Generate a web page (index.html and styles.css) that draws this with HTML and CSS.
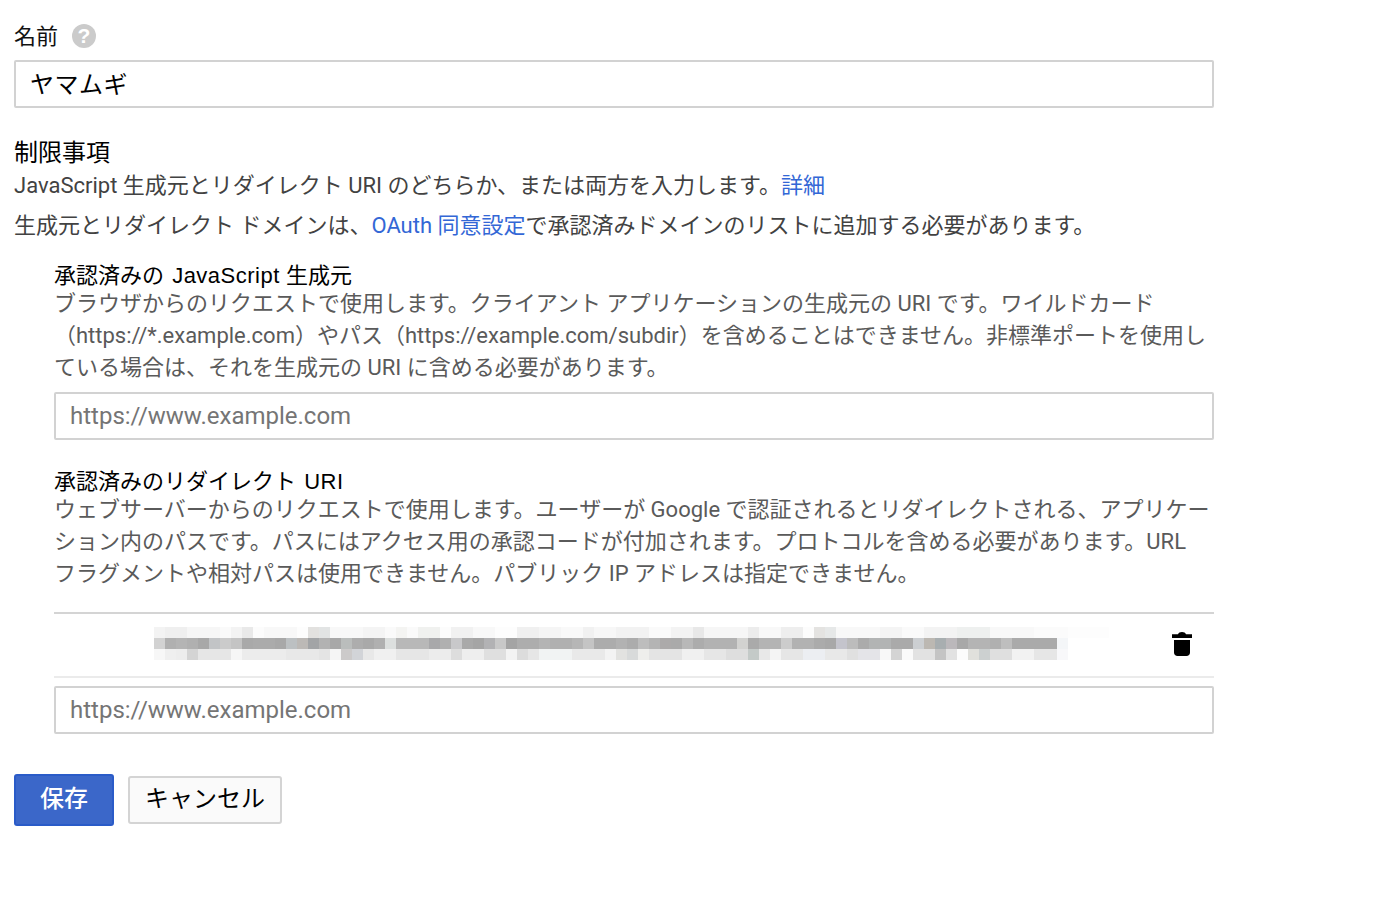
FILE: index.html
```html
<!DOCTYPE html>
<html lang="ja">
<head>
<meta charset="utf-8">
<title>名前</title>
<link rel="stylesheet" href="styles.css">
</head>
<body>
<form class="form">
  <div class="name-label">
    <span class="label">名前</span>
    <span class="help">?</span>
  </div>
  <div class="field value">ヤマムギ</div>

  <h2 class="section-title">制限事項</h2>
  <p class="intro first">JavaScript 生成元とリダイレクト URI のどちらか、または両方を入力します。<a href="#">詳細</a></p>
  <p class="intro second">生成元とリダイレクト ドメインは、<a href="#">OAuth 同意設定</a>で承認済みドメインのリストに追加する必要があります。</p>

  <section class="group origins">
    <h3 class="group-title">承認済みの <span class="latin">JavaScript</span> 生成元</h3>
    <p class="desc">ブラウザからのリクエストで使用します。クライアント アプリケーションの生成元の URI です。ワイルドカード<br>（https://*.example.com）やパス（https://example.com/subdir）を含めることはできません。非標準ポートを使用し<br>ている場合は、それを生成元の URI に含める必要があります。</p>
    <div class="field placeholder">https://www.example.com</div>
  </section>

  <section class="group redirects">
    <h3 class="group-title">承認済みのリダイレクト <span class="latin">URI</span></h3>
    <p class="desc">ウェブサーバーからのリクエストで使用します。ユーザーが Google で認証されるとリダイレクトされる、アプリケー<br>ション内のパスです。パスにはアクセス用の承認コードが付加されます。プロトコルを含める必要があります。URL<br>フラグメントや相対パスは使用できません。パブリック IP アドレスは指定できません。</p>
    <div class="uri-row">
      <div class="blurred"><i class="px top"></i><i class="px mid"></i><i class="px bot"></i></div>
      <svg class="trash" viewBox="0 0 20 24" width="20" height="24" aria-hidden="true"><path d="M6 2.2C6.6.8 8 0 10 0s3.4.8 4 2.200L20 2.200V6H0V2.200ZM2 8h16v12.500c0 2-1.500 3.500-3.500 3.500h-9C3.500 24 2 22.500 2 20.500Z"/></svg>
    </div>
    <div class="field placeholder">https://www.example.com</div>
  </section>

  <div class="actions">
    <button type="button" class="btn primary">保存</button>
    <button type="button" class="btn secondary">キャンセル</button>
  </div>
</form>
</body>
</html>
```
FILE: styles.css
```css
* { box-sizing: border-box; }
html, body { margin: 0; padding: 0; background: #fff; }
body {
  font-family: Roboto, "Noto Sans CJK JP", "Liberation Sans", sans-serif;
  font-size: 22px;
  color: #212121;
}
.form { width: 1214px; padding: 20px 0 0 14px; }
.name-label { display: flex; align-items: center; height: 32px; color: #111; }
.label { padding-bottom: 5px; }
.help {
  width: 24px; height: 24px; margin-left: 14px; border-radius: 50%;
  background: #cbcbcb; color: #fff; font: bold 21px/24px "Liberation Sans", sans-serif; text-align: center;
}
.field {
  height: 48px; border: 2px solid #d2d2d2; border-radius: 2px; padding: 0 14px;
  line-height: 44px; font-size: 24px; background: #fff;
}
.value { margin-top: 8px; color: #000; line-height: 46px; letter-spacing: .5px; }
.section-title { margin: 28px 0 0; font-size: 24px; font-weight: 400; line-height: 34px; color: #000; }
.intro { margin: 0; line-height: 32px; color: #424242; }
.first { margin-top: 0; }
.second { margin-top: 8px; }
a { color: #3367d6; text-decoration: none; }
.group { margin-left: 40px; }
.origins { margin-top: 18px; }
.redirects { margin-top: 26px; }
.group-title {
  margin: 0; font-family: "Liberation Sans", "Noto Sans CJK JP", sans-serif;
  font-size: 22px; font-weight: 400; line-height: 32px; color: #000; height: 28px;
}
.latin { margin-left: 2px; letter-spacing: .5px; }
.desc { margin: 0; line-height: 32px; color: #5a5a5a; white-space: nowrap; }
.placeholder { margin-top: 8px; color: #757575; }
.uri-row {
  display: flex; align-items: center; justify-content: space-between; height: 66px; margin-top: 22px;
  border-top: 2px solid #d4d4d4; border-bottom: 2px solid #ebebeb;
  padding: 0 22px 2px 100px;
}
.blurred { display: flex; flex-direction: column; width: 914px; height: 34px; }
.px { display: block; width: 100%; height: 11px; flex: none; }
.px.top {
  width: 955px;
  background: #fdfdfd linear-gradient(90deg,
    #f3f3f3 0 11px, #efefef 11px 33px, #f6f6f6 33px 66px, #fafafa 66px 77px, #f3f3f3 77px 88px, #e9e9e9 88px 99px,
    #fcfcfc 99px 110px, #f8f8f8 110px 143px, #fdfdfd 143px 154px, #e2e1df 154px 165px, #e2e4e4 165px 176px, #f8f8f8 176px 209px,
    #f4f4f4 209px 231px, #fafafa 231px 242px, #f4f4f2 242px 253px, #fafafa 253px 264px, #f0f1ef 264px 286px, #fcfcfc 286px 297px,
    #f1f1f1 297px 319px, #f8f8f8 319px 341px, #fdfdfd 341px 363px, #f0f0f0 363px 385px, #f5f5f5 385px 407px, #f9f9f9 407px 429px,
    #f1f1f1 429px 440px, #f7f7f7 440px 462px, #f2f2f2 462px 495px, #fafafa 495px 517px, #f3f3f3 517px 539px, #e8e8e8 539px 550px,
    #f6f6f6 550px 594px, #ececec 594px 605px, #f8f8f8 605px 627px, #eeeeee 627px 649px, #fcfcfc 649px 660px, #e4e3e1 660px 671px,
    #e6e8e8 671px 682px, #f8f8f8 682px 726px, #f4f4f4 726px 748px, #fafafa 748px 770px, #f3f3f3 770px 803px, #eef0ef 803px 836px,
    #f8f8f8 836px 880px, #fbfbfb 880px 914px) no-repeat 0 0 / 914px 100%;
}
.px.mid {
  background: linear-gradient(90deg,
    #d2d2d2 0 11px, #b0b0b0 11px 22px, #b4b4b4 22px 33px, #b0b0b0 33px 44px, #a8a8a8 44px 55px, #c2c4c6 55px 66px,
    #cbcbcb 66px 77px, #c4c4c4 77px 88px, #a9a9a9 88px 99px, #ababab 99px 121px, #a8a8a8 121px 132px, #bcc0c2 132px 143px,
    #bcb9b6 143px 154px, #a2a4a6 154px 165px, #b2b2b2 165px 176px, #a8a8a8 176px 187px, #babdbc 187px 198px, #adadad 198px 209px,
    #a9a9a9 209px 220px, #b0b0b0 220px 231px, #dcdfde 231px 242px, #b8b8b8 242px 275px, #a8a8aa 275px 286px, #b0b0b0 286px 297px,
    #c8c8ca 297px 308px, #a9a9a9 308px 319px, #a5a5a5 319px 330px, #b2b2b4 330px 341px, #c8c8c8 341px 352px, #a4a4a4 352px 363px,
    #adadad 363px 385px, #b4b4b4 385px 396px, #b0b0b0 396px 418px, #b6b6b6 418px 429px, #c4c4c4 429px 440px, #acacac 440px 462px,
    #b2b2b2 462px 473px, #acacac 473px 484px, #bdbdbd 484px 495px, #b4b4b4 495px 506px, #acaaaa 506px 517px, #aaaaaa 517px 528px,
    #b8b8b8 528px 539px, #acacac 539px 550px, #b2b2b2 550px 583px, #d2d2d0 583px 594px, #aaaaaa 594px 605px, #b4b4b4 605px 627px,
    #cccccc 627px 638px, #b2b2b2 638px 660px, #ababab 660px 671px, #a8a8a8 671px 682px, #c4c4cc 682px 693px, #bcbcbc 693px 704px,
    #ababab 704px 715px, #b2b4b4 715px 737px, #aaaaaa 737px 759px, #cccfd2 759px 770px, #bcb8b2 770px 781px, #a8aeb0 781px 792px,
    #bbb8bb 792px 803px, #a8a8a8 803px 814px, #b4b4b4 814px 836px, #b0b0b0 836px 847px, #bebebe 847px 858px, #aaaaaa 858px 869px,
    #aaaaaa 869px 903px, #f4f6f8 903px 914px);
}
.px.bot {
  background: linear-gradient(90deg,
    #f7f7f7 0 11px, #efefef 11px 22px, #ededed 22px 33px, #d4d4d4 33px 44px, #e6e6e6 44px 77px, #f6f6f6 77px 88px,
    #ececec 88px 132px, #e8e8e8 132px 165px, #e4e4e4 165px 176px, #f5f5f5 176px 187px, #cccaca 187px 198px, #d2d4d8 198px 209px,
    #e8e8e8 209px 220px, #f0f0f0 220px 242px, #e6e6e6 242px 275px, #ececec 275px 297px, #dddddd 297px 308px, #eeeeee 308px 330px,
    #dfdfdf 330px 352px, #f3f3f3 352px 363px, #dcdcdc 363px 374px, #e6e6e6 374px 385px, #f1f3f3 385px 418px, #e9e9e9 418px 451px,
    #f3f3f3 451px 462px, #e2e2e0 462px 473px, #d8dada 473px 484px, #eeeeec 484px 495px, #e4e4e4 495px 528px, #f0f0f0 528px 550px,
    #e6e6e6 550px 572px, #dedede 572px 594px, #c4cac8 594px 605px, #e8e8e8 605px 616px, #f4f4f4 616px 627px, #e6e6e6 627px 649px,
    #eceef2 649px 671px, #e8e8e8 671px 693px, #e0e0e0 693px 704px, #e4e4e8 704px 726px, #f8f8f8 726px 737px, #d4d4d4 737px 748px,
    #fafafa 748px 759px, #e2e2e2 759px 781px, #c4c4c4 781px 792px, #e2e2e2 792px 803px, #fcfcfc 803px 814px, #e0e0dc 814px 825px,
    #ccd0d0 825px 836px, #dfdfdf 836px 858px, #f2f2f2 858px 880px, #e6e6e6 880px 903px, #f8f8fa 903px 914px);
}
.trash { flex: none; display: block; fill: #000; }
.actions { display: flex; align-items: center; gap: 14px; margin-top: 40px; }
.btn { font-family: inherit; font-size: 24px; padding: 0; border-radius: 3px; }
.primary { width: 100px; height: 52px; padding-bottom: 8px; background: #3b67c9; border: 2px solid #2a5bc8; color: #fff; font-weight: 500; }
.secondary { width: 154px; height: 48px; padding-bottom: 7px; background: #fafafa; border: 2px solid #d4d4d4; color: #000; }
```
